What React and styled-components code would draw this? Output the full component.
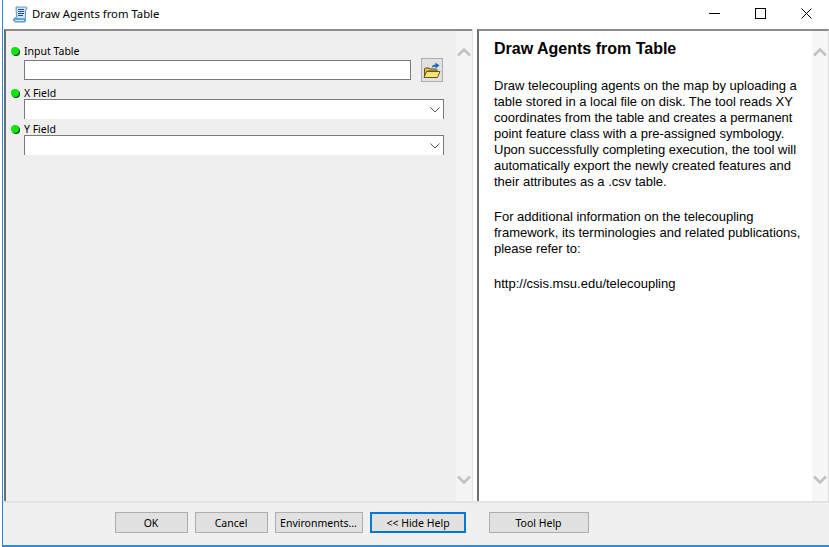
import React from "react";
import styled, { createGlobalStyle } from "styled-components";

const GlobalStyle = createGlobalStyle`
  html, body {
    margin: 0;
    padding: 0;
    background: #fff;
  }
  body {
    font-family: "Liberation Sans", Arial, sans-serif;
    overflow: hidden;
  }
`;

const Page = styled.div`
  width: 829px;
  height: 547px;
  padding-left: 2px;
  box-sizing: border-box;
  background: #fff;
`;

const Win = styled.div`
  height: 547px;
  box-sizing: border-box;
  display: flex;
  flex-direction: column;
  border-left: 1px solid #2f86d6;
  border-bottom: 2px solid #3a87cc;
  background: #f0f0f0;
`;

const TitleBar = styled.div`
  height: 29px;
  flex: none;
  display: flex;
  align-items: center;
  background: #fff;
  padding-left: 10px;
`;

const TitleText = styled.span`
  font-family: "Noto Sans", sans-serif;
  font-size: 11.3px;
  color: #000;
  margin-left: 4px;
  flex: 1;
  position: relative;
  top: -1px;
`;

const WinButton = styled.div`
  width: 46px;
  height: 29px;
  display: flex;
  align-items: center;
  justify-content: center;
  position: relative;
  top: -1px;
`;

const Body = styled.div`
  flex: 1;
  min-height: 0;
  display: flex;
  background: #fff;
  padding-left: 1px;
`;

const LeftPane = styled.div`
  width: 468px;
  flex: none;
  box-sizing: border-box;
  display: flex;
  border-top: 2px solid #8a8a8a;
  border-left: 2px solid #6e6e6e;
  background: #efefef;
`;

const Form = styled.div`
  flex: 1;
  min-width: 0;
  padding: 13px 0 0 5px;
  display: flex;
  flex-direction: column;
`;

const Scrollbar = styled.div`
  width: ${(p) => p.$width}px;
  flex: none;
  display: flex;
  flex-direction: column;
  justify-content: space-between;
  align-items: center;
  padding: 17px 0;
  box-sizing: border-box;
  background: ${(p) => p.$bg};
`;

const Divider = styled.div`
  width: 5px;
  flex: none;
  box-sizing: border-box;
  background: #fff;
  border-left: 1px solid #e2e2e2;
`;

const RightPane = styled.div`
  flex: 1;
  min-width: 0;
  display: flex;
  box-sizing: border-box;
  background: #fff;
  border-top: 2px solid #8a8a8a;
  border-left: 2px solid #6e6e6e;
  border-right: 1px solid #dcdcdc;
`;

const Help = styled.div`
  flex: 1;
  min-width: 0;
  padding: 8px 0 0 15px;
  font-size: 13px;
  line-height: 16px;
  color: #000;
`;

const HelpTitle = styled.h1`
  margin: 0 0 19px;
  font-size: 16px;
  line-height: 20px;
  font-weight: 700;
`;

const HelpPara = styled.p`
  margin: 0 0 19px;
  white-space: nowrap;
`;

const FieldRow = styled.div`
  margin-top: ${(p) => p.$top}px;
`;

const LabelRow = styled.div`
  display: flex;
  align-items: center;
  height: 14px;
`;

const Bullet = styled.span`
  width: 8px;
  height: 8px;
  border-radius: 50%;
  background: #08e608;
  box-shadow: 1px 1px 0 #1f3f1f;
  margin-right: 5px;
  flex: none;
`;

const Label = styled.span`
  font-family: "Noto Sans", sans-serif;
  font-size: 10.5px;
  color: #000;
`;

const InputLine = styled.div`
  display: flex;
  align-items: center;
  margin-left: 13px;
`;

const TextBox = styled.div`
  width: 387px;
  height: 20px;
  box-sizing: border-box;
  background: #fff;
  border: 1px solid #7a7a7a;
`;

const BrowseButton = styled.div`
  width: 22px;
  height: 24px;
  box-sizing: border-box;
  margin-left: 10px;
  display: flex;
  align-items: center;
  justify-content: center;
  background: #e1e1e1;
  border: 1px solid #adadad;
`;

const Select = styled.div`
  width: 420px;
  height: 20px;
  margin: -1px 0 0 13px;
  box-sizing: border-box;
  background: #fff;
  border: 1px solid #7a7a7a;
  border-bottom: none;
  display: flex;
  align-items: center;
  justify-content: flex-end;
  padding-right: 3px;
`;

const Footer = styled.div`
  height: 44px;
  flex: none;
  box-sizing: border-box;
  display: flex;
  padding: 9px 0 0 112px;
  background: #f0f0f0;
  border-top: 2px solid #e3e3e3;
`;

const Button = styled.div`
  width: ${(p) => p.$width}px;
  height: 21px;
  margin-right: ${(p) => p.$gap}px;
  box-sizing: border-box;
  display: flex;
  align-items: center;
  justify-content: center;
  padding-right: ${(p) => (p.$active ? 0 : 1)}px;
  background: #e1e1e1;
  border: ${(p) => (p.$active ? "2px solid #0078d7" : "1px solid #adadad")};
  font-family: "Noto Sans", sans-serif;
  font-size: 10.5px;
  color: #000;
  white-space: nowrap;
`;

const Chevron = ({ down }) => (
  <svg width="14" height="9" viewBox="0 0 14 9">
    <path
      d={down ? "M1 1.5 7 7.5 13 1.5" : "M1 7.5 7 1.5 13 7.5"}
      fill="none"
      stroke="#c2c2c2"
      strokeWidth="2.6"
    />
  </svg>
);

const SelectArrow = () => (
  <svg width="10" height="6" viewBox="0 0 10 6">
    <path d="M.5.5 5 5 9.5.5" fill="none" stroke="#555" strokeWidth="1" />
  </svg>
);

const ScrollIcon = () => (
  <svg width="15" height="17" viewBox="0 0 15 17">
    <path d="M3 1h9.500c1.200 0 2 .8 1.500 2l-1.500 1v8.500L5 15H2c-1.200 0-2-.8-1.600-1.800L3.500 11z" fill="#cfe3f7" stroke="#3f78b8" strokeWidth=".8" />
    <path d="M5 3.500h6M5 5.500h6M5 7.500h6M5 9.500h5" stroke="#1c4f96" strokeWidth="1" />
    <path d="M.5 14c.5-2 2.500-2.500 4-2l8 .5c1 1.500.5 3.500-1 4H3C1.500 16.500.5 15.500.5 14z" fill="#5b9ad9" />
    <path d="M2 14.500h9" stroke="#e6f1fb" strokeWidth="1" />
  </svg>
);

const FolderIcon = () => (
  <svg width="18" height="17" viewBox="0 0 18 17">
    <path d="M1.500 15V7c0-.7.4-1 1-1h3.500l1 1h6c.6 0 1 .4 1 1v1H5z" fill="#d9b84a" stroke="#6b5414" strokeWidth="1" />
    <path d="M1 15.500 3.500 9.500h13.500L14.500 15.500z" fill="#f8e27e" stroke="#6b5414" strokeWidth="1" />
    <path d="M8.500 6c.3-2.500 2-3.500 4-3.500V.5L16.500 3.500 12.500 6.500V4.800c-1.500 0-3 .2-4 1.200z" fill="#1a6cc0" />
  </svg>
);

const App = () => (
  <Page>
    <GlobalStyle />
    <Win>
      <TitleBar>
        <ScrollIcon />
        <TitleText>Draw Agents from Table</TitleText>
        <WinButton>
          <svg width="11" height="11" viewBox="0 0 11 11">
            <path d="M0 5.500h11" stroke="#000" strokeWidth="1" />
          </svg>
        </WinButton>
        <WinButton>
          <svg width="11" height="11" viewBox="0 0 11 11">
            <rect x=".5" y=".5" width="10" height="10" fill="none" stroke="#000" />
          </svg>
        </WinButton>
        <WinButton>
          <svg width="11" height="11" viewBox="0 0 11 11">
            <path d="M.5.5l10 10M10.500.5l-10 10" stroke="#000" strokeWidth="1" />
          </svg>
        </WinButton>
      </TitleBar>
      <Body>
        <LeftPane>
          <Form>
            <FieldRow $top={0}>
              <LabelRow>
                <Bullet />
                <Label>Input Table</Label>
              </LabelRow>
              <InputLine>
                <TextBox />
                <BrowseButton>
                  <FolderIcon />
                </BrowseButton>
              </InputLine>
            </FieldRow>
            <FieldRow $top={4}>
              <LabelRow>
                <Bullet />
                <Label>X Field</Label>
              </LabelRow>
              <Select>
                <SelectArrow />
              </Select>
            </FieldRow>
            <FieldRow $top={3}>
              <LabelRow>
                <Bullet />
                <Label>Y Field</Label>
              </LabelRow>
              <Select>
                <SelectArrow />
              </Select>
            </FieldRow>
          </Form>
          <Scrollbar $width={16} $bg="#f4f4f4">
            <Chevron />
            <Chevron down />
          </Scrollbar>
        </LeftPane>
        <Divider />
        <RightPane>
          <Help>
            <HelpTitle>Draw Agents from Table</HelpTitle>
            <HelpPara>
              Draw telecoupling agents on the map by uploading a<br />
              table stored in a local file on disk. The tool reads XY<br />
              coordinates from the table and creates a permanent<br />
              point feature class with a pre-assigned symbology.<br />
              Upon successfully completing execution, the tool will<br />
              automatically export the newly created features and<br />
              their attributes as a .csv table.
            </HelpPara>
            <HelpPara>
              For additional information on the telecoupling<br />
              framework, its terminologies and related publications,<br />
              please refer to:
            </HelpPara>
            <HelpPara>http://csis.msu.edu/telecoupling</HelpPara>
          </Help>
          <Scrollbar $width={16} $bg="#f7f7f7">
            <Chevron />
            <Chevron down />
          </Scrollbar>
        </RightPane>
      </Body>
      <Footer>
        <Button $width={73} $gap={7}>OK</Button>
        <Button $width={73} $gap={7}>Cancel</Button>
        <Button $width={88} $gap={7}>Environments...</Button>
        <Button $width={96} $gap={23} $active>&lt;&lt; Hide Help</Button>
        <Button $width={100} $gap={0}>Tool Help</Button>
      </Footer>
    </Win>
  </Page>
);

export default App;
